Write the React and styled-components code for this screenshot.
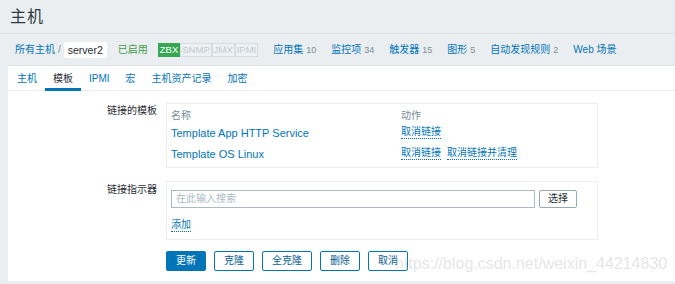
import styled, { createGlobalStyle } from "styled-components";

const GlobalStyle = createGlobalStyle`
  html, body {
    margin: 0;
    padding: 0;
    background: #ebeef1;
  }
  body {
    font-family: "Liberation Sans", "Noto Sans CJK SC", sans-serif;
    font-size: 10px;
    line-height: 12px;
    color: #1f2c33;
  }
`;

const Page = styled.div`
  position: relative;
  width: 675px;
  height: 284px;
  overflow: hidden;
`;

const Header = styled.header`
  height: 33px;
  display: flex;
  align-items: center;
  padding-left: 10px;
  border-bottom: 1px solid #dde2e6;
`;

const Title = styled.h1`
  margin: 0;
  font-size: 16px;
  line-height: 20px;
  font-weight: normal;
  letter-spacing: 1px;
  color: #2b3a42;
`;

const Nav = styled.nav`
  height: 31px;
  display: flex;
  align-items: center;
  padding-left: 15px;
  gap: 15px;
  & > * {
    flex-shrink: 0;
  }
`;

const Crumbs = styled.div`
  display: flex;
  align-items: center;
  gap: 3px;
  margin-right: -4px;
`;

const Link = styled.a`
  color: #0275b8;
  text-decoration: none;
  white-space: nowrap;
  font-size: ${({ $size }) => $size || 10}px;
`;

const Slash = styled.span`
  color: #768d99;
`;

const Current = styled.span`
  background: #fff;
  color: #1f2c33;
  font-size: 10.5px;
  padding: 2px 4px;
  border-radius: 2px;
`;

const Enabled = styled.span`
  color: #429e47;
  margin-right: -5px;
`;

const Badges = styled.div`
  display: flex;
`;

const Badge = styled.span`
  flex-shrink: 0;
  font-size: 9.5px;
  line-height: 12px;
  padding: 0 1px;
  border: 1px solid ${({ $on }) => ($on ? "#34a852" : "#d6dcdf")};
  background: ${({ $on }) => ($on ? "#34a852" : "#eef1f3")};
  color: ${({ $on }) => ($on ? "#fff" : "#c2cace")};
  & + & {
    border-left: 1px solid #d6dcdf;
  }
`;

const Count = styled.span`
  color: #768d99;
  font-size: 9px;
  margin-left: 3px;
`;

const Panel = styled.main`
  margin-left: 8px;
  background: #fff;
  border-top: 1px solid #dde2e6;
  padding-bottom: 10px;
`;

const Tabs = styled.div`
  display: flex;
  height: 24px;
  padding-left: 1px;
  border-bottom: 1px solid #ebeef1;
`;

const Tab = styled.div`
  display: flex;
  align-items: center;
  padding: 3px 8px 0;
  color: ${({ $active }) => ($active ? "#1f2c33" : "#0275b8")};
  border-bottom: 3px solid ${({ $active }) => ($active ? "#0275b8" : "transparent")};
  margin-bottom: -1px;
`;

const Form = styled.div`
  display: grid;
  grid-template-columns: 149px 432px;
  column-gap: 9px;
  row-gap: 13px;
  padding-top: 12px;
`;

const Label = styled.div`
  text-align: right;
  padding-top: ${({ $top }) => $top}px;
  color: #1f2c33;
`;

const Box = styled.div`
  border: 1px solid #ebeef1;
  padding: ${({ $pad }) => $pad};
`;

const Table = styled.div`
  display: grid;
  grid-template-columns: 230px 1fr;
  grid-template-rows: 12px 21px 21px;
  align-items: center;
`;

const Head = styled.div`
  color: #768d99;
`;

const Actions = styled.div`
  display: flex;
  gap: 6px;
`;

const Dotted = styled.a`
  color: #0275b8;
  text-decoration: none;
  border-bottom: 1px dotted #0275b8;
  line-height: 12px;
  align-self: flex-start;
`;

const SearchRow = styled.div`
  display: flex;
  gap: 4px;
`;

const Input = styled.div`
  width: 354px;
  height: 16px;
  border: 1px solid #acbbc2;
  padding: 0 4px;
  display: flex;
  align-items: center;
  color: #acbbc2;
`;

const SelectButton = styled.button`
  width: 38px;
  height: 18px;
  border: 1px solid #97aab3;
  background: #fff;
  border-radius: 2px;
  font: inherit;
  color: #1f2c33;
  padding: 0;
`;

const AddRow = styled.div`
  margin-top: 11px;
  display: flex;
`;

const Buttons = styled.div`
  grid-column: 2;
  display: flex;
  gap: 8px;
  margin-top: -2px;
`;

const Button = styled.button`
  height: 20px;
  padding: 0 9px;
  border-radius: 2px;
  font: inherit;
  border: 1px solid #0275b8;
  background: ${({ $primary }) => ($primary ? "#0275b8" : "#fff")};
  color: ${({ $primary }) => ($primary ? "#fff" : "#0b5d94")};
`;

const Watermark = styled.div`
  position: absolute;
  left: 395px;
  top: 255px;
  font-size: 16px;
  line-height: 18px;
  color: rgba(190, 190, 190, 0.4);
  white-space: nowrap;
  pointer-events: none;
`;

const navItems = [
  ["应用集", "10"],
  ["监控项", "34"],
  ["触发器", "15"],
  ["图形", "5"],
  ["自动发现规则", "2"],
  ["Web 场景", ""],
];

const tabs = ["主机", "模板", "IPMI", "宏", "主机资产记录", "加密"];

export default function App() {
  return (
    <Page>
      <GlobalStyle />
      <Header>
        <Title>主机</Title>
      </Header>
      <Nav>
        <Crumbs>
          <Link>所有主机</Link>
          <Slash>/</Slash>
          <Current>server2</Current>
        </Crumbs>
        <Enabled>已启用</Enabled>
        <Badges>
          <Badge $on>ZBX</Badge>
          <Badge>SNMP</Badge>
          <Badge>JMX</Badge>
          <Badge>IPMI</Badge>
        </Badges>
        {navItems.map(([name, n]) => (
          <Link key={name}>
            {name}
            {n && <Count>{n}</Count>}
          </Link>
        ))}
      </Nav>
      <Panel>
        <Tabs>
          {tabs.map((t) => (
            <Tab key={t} $active={t === "模板"}>
              {t}
            </Tab>
          ))}
        </Tabs>
        <Form>
          <Label $top={2}>链接的模板</Label>
          <Box $pad="6px 4px 3px">
            <Table>
              <Head>名称</Head>
              <Head>动作</Head>
              <Link $size={11}>Template App HTTP Service</Link>
              <Actions>
                <Dotted>取消链接</Dotted>
              </Actions>
              <Link $size={11}>Template OS Linux</Link>
              <Actions>
                <Dotted>取消链接</Dotted>
                <Dotted>取消链接并清理</Dotted>
              </Actions>
            </Table>
          </Box>
          <Label $top={3}>链接指示器</Label>
          <Box $pad="8px 4px 7px">
            <SearchRow>
              <Input>在此输入搜索</Input>
              <SelectButton>选择</SelectButton>
            </SearchRow>
            <AddRow>
              <Dotted>添加</Dotted>
            </AddRow>
          </Box>
          <Buttons>
            <Button $primary>更新</Button>
            <Button>克隆</Button>
            <Button>全克隆</Button>
            <Button>删除</Button>
            <Button>取消</Button>
          </Buttons>
        </Form>
      </Panel>
      <Watermark>https://blog.csdn.net/weixin_44214830</Watermark>
    </Page>
  );
}
